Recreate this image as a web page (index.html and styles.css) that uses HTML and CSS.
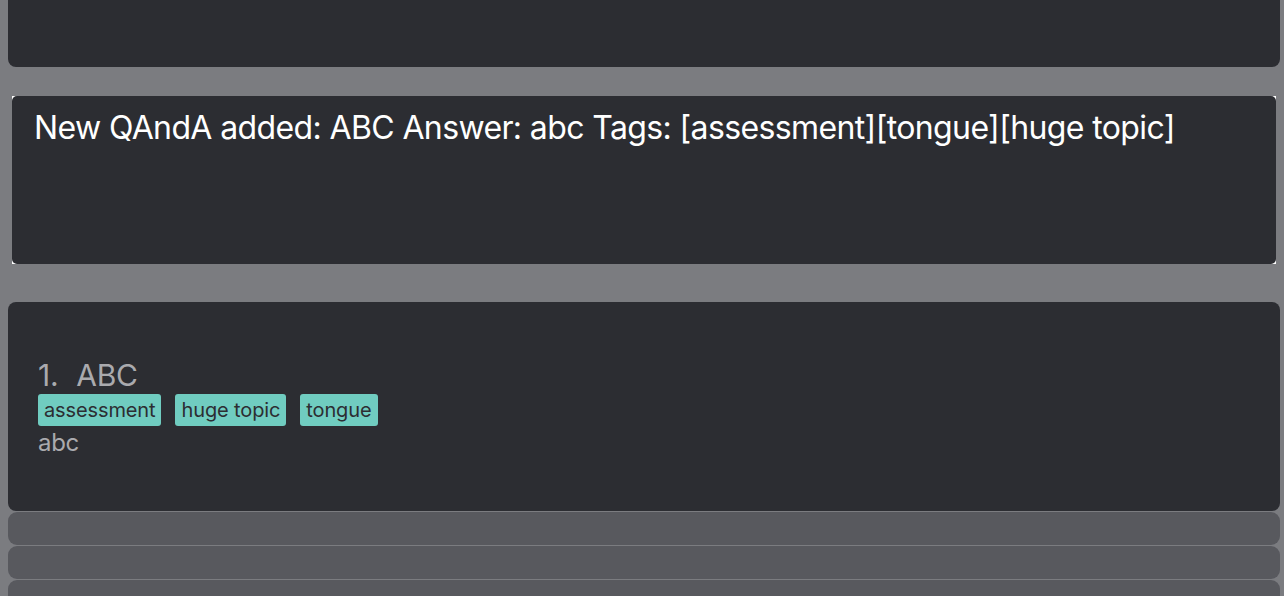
FILE: index.html
```html
<!DOCTYPE html>
<html>
<head>
<meta charset="utf-8">
<link rel="stylesheet" href="styles.css">
</head>
<body>
<div class="command-box"></div>
<div class="result-frame">
  <div class="result-box">New QAndA added: ABC Answer: abc Tags: [assessment][tongue][huge topic]</div>
</div>
<div class="list">
  <div class="card">
    <div class="card-title"><span class="idx">1.</span><span>ABC</span></div>
    <div class="tags">
      <span class="tag">assessment</span>
      <span class="tag">huge topic</span>
      <span class="tag">tongue</span>
    </div>
    <div class="answer">abc</div>
  </div>
  <div class="empty-card"></div>
  <div class="empty-card"></div>
  <div class="empty-card"></div>
</div>
</body>
</html>
```
FILE: styles.css
```css
html, body {
  margin: 0;
  padding: 0;
}
body {
  background: #7b7c80;
  font-family: Inter, "Noto Sans", sans-serif;
  height: 596px;
  overflow: hidden;
}
.command-box {
  margin: 0 4px 0 8px;
  height: 67px;
  background: #2c2d32;
  border-radius: 0 0 8px 8px;
}
.result-frame {
  margin: 29px 8px 0 12px;
  height: 168px;
  background: #ffffff;
  display: flex;
}
.result-box {
  flex: 1;
  background: #2c2d32;
  border-radius: 5px;
  color: #ffffff;
  font-size: 32px;
  letter-spacing: -0.62px;
  padding: 10px 22px;
  line-height: 44px;
}
.list {
  margin: 38px 4px 0 8px;
  display: flex;
  flex-direction: column;
  gap: 1px;
}
.card {
  background: #2c2d32;
  border-radius: 8px;
  height: 209px;
  box-sizing: border-box;
  padding: 55px 30px 0 30px;
}
.card-title {
  color: #aaaaae;
  font-size: 30px;
  line-height: 37px;
  letter-spacing: -0.3px;
  display: flex;
  gap: 18px;
}
.tags {
  display: flex;
  gap: 14px;
  margin-top: 0px;
}
.tag {
  background: #70ccc0;
  color: #2c2d32;
  font-size: 20px;
  letter-spacing: -0.12px;
  line-height: 32px;
  padding: 0 6px;
  border-radius: 3px;
}
.answer {
  color: #aaaaae;
  font-size: 24px;
  letter-spacing: -0.3px;
  line-height: 34px;
}
.empty-card {
  background: #58595e;
  border-radius: 9px;
  height: 33px;
}
```
